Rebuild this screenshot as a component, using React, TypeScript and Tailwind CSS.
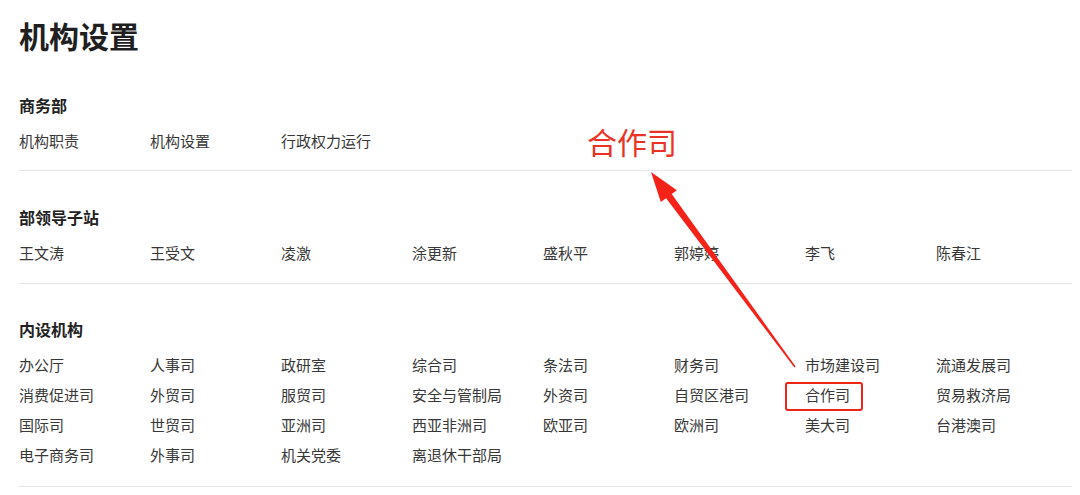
const sections: { title: string; items: string[] }[] = [
  { title: "商务部", items: ["机构职责", "机构设置", "行政权力运行"] },
  {
    title: "部领导子站",
    items: ["王文涛", "王受文", "凌激", "涂更新", "盛秋平", "郭婷婷", "李飞", "陈春江"],
  },
  {
    title: "内设机构",
    items: [
      "办公厅", "人事司", "政研室", "综合司", "条法司", "财务司", "市场建设司", "流通发展司",
      "消费促进司", "外贸司", "服贸司", "安全与管制局", "外资司", "自贸区港司", "合作司", "贸易救济局",
      "国际司", "世贸司", "亚洲司", "西亚非洲司", "欧亚司", "欧洲司", "美大司", "台港澳司",
      "电子商务司", "外事司", "机关党委", "离退休干部局",
    ],
  },
];

const pads = ["pb-[14px] pt-[38px]", "pb-[15px] pt-[34px]", "pb-[16px] pt-[33px]"];

export default function App() {
  return (
    <div
      className="relative h-[495px] w-[1080px] overflow-hidden bg-white pl-[19px] pr-[8px] pt-[15px] text-[#383838]"
      style={{ fontFamily: '"Noto Sans CJK SC", "Noto Sans", sans-serif' }}
    >
      <h1 className="text-[30px] font-bold leading-[40px] text-[#1f1f1f]">机构设置</h1>

      {sections.map((s, i) => (
        <section key={s.title} className={`border-b border-[#e6e6e6] ${pads[i]}`}>
          <h2 className="text-[16px] font-bold leading-[24px] text-[#222]">{s.title}</h2>
          <ul className="mt-[9px] grid grid-cols-[repeat(8,131px)] text-[15px] leading-[30px]">
            {s.items.map((it) => (
              <li key={it} className="whitespace-nowrap">
                {it}
              </li>
            ))}
          </ul>
        </section>
      ))}

      {/* annotation overlay */}
      <div className="absolute left-[587px] top-[120px] text-[30px] leading-[42px] text-[#ea3324]">合作司</div>
      <div className="absolute left-[785px] top-[382px] h-[29px] w-[78px] rounded-[3px] border-[2.5px] border-[#ee2418]" />
      <svg className="pointer-events-none absolute left-0 top-0" width="1080" height="495">
        <polygon
          points="651,172 676.9,190.2 671.7,194.1 795.6,366.5 794.4,367.5 666.1,198.3 660.8,202.1"
          fill="#f5221a"
        />
      </svg>
    </div>
  );
}
